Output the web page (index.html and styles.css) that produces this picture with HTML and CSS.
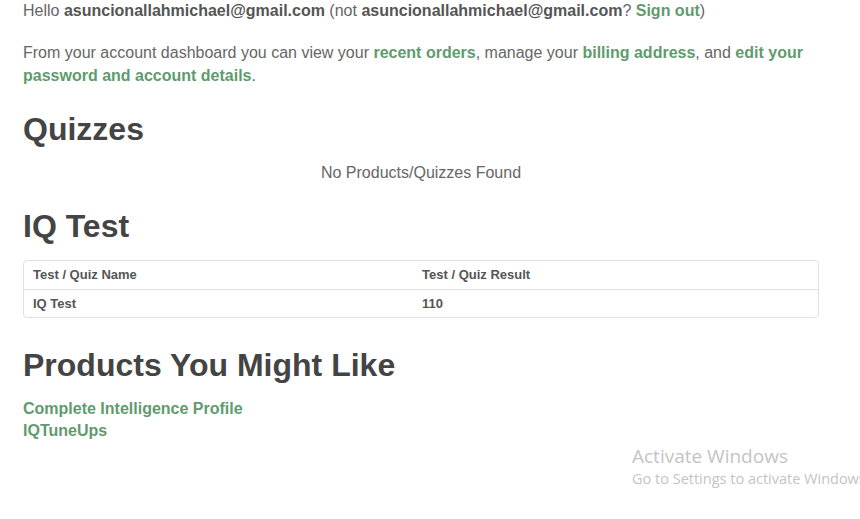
FILE: index.html
```html
<html>
  <head>
    <link rel="stylesheet" href="styles.css">
  </head>
  <body>
    <div class="account">
      <p class="intro">Hello <strong>asuncionallahmichael@gmail.com</strong> (not <strong>asuncionallahmichael@gmail.com</strong>? <a href="#">Sign out</a>)</p>
      <p class="intro">From your account dashboard you can view your <a href="#">recent orders</a>, manage your <a href="#">billing address</a>, and <a href="#">edit your password and account details</a>.</p>

      <h2 class="heading">Quizzes</h2>
      <p class="empty">No Products/Quizzes Found</p>

      <h2 class="heading heading-iq">IQ Test</h2>
      <div class="results">
        <table class="results-table">
          <tr>
            <th class="col-name">Test / Quiz Name</th>
            <th>Test / Quiz Result</th>
          </tr>
          <tr>
            <td class="col-name">IQ Test</td>
            <td>110</td>
          </tr>
        </table>
      </div>

      <h2 class="heading heading-products">Products You Might Like</h2>
      <ul class="products">
        <li><a href="#">Complete Intelligence Profile</a></li>
        <li><a href="#">IQTuneUps</a></li>
      </ul>
    </div>

    <div class="watermark">
      <div class="watermark-title">Activate Windows</div>
      <div class="watermark-sub">Go to Settings to activate Windows.</div>
    </div>
  </body>
</html>
```

FILE: styles.css
```css
body {
  margin: 0;
  background: #fff;
  font-family: "Liberation Sans", Arial, sans-serif;
  color: #666;
  overflow: hidden;
}
.account {
  width: 796px;
  padding: 0 0 0 23px;
  margin-top: -1px;
}
.intro {
  font-size: 16px;
  line-height: 23px;
  margin: 0 0 19px 0;
}
.intro strong {
  color: #555;
}
a {
  color: #5f9b6e;
  font-weight: bold;
  text-decoration: none;
}
.heading {
  font-size: 32px;
  line-height: 38px;
  font-weight: bold;
  color: #444;
  margin: 23px 0 13px 0;
}
.empty {
  font-size: 16px;
  line-height: 23px;
  text-align: center;
  margin: 0;
}
.heading-iq {
  margin-bottom: 15px;
}
.results {
  border: 1px solid #e1e1e1;
  border-radius: 4px;
}
.results-table {
  width: 100%;
  border-collapse: collapse;
  font-size: 13px;
  font-weight: bold;
  color: #555;
}
.results-table th,
.results-table td {
  text-align: left;
  padding: 0 9px;
  height: 28px;
}
.results-table th {
  border-bottom: 1px solid #e1e1e1;
}
.col-name {
  width: 49%;
}
.heading-products {
  margin-top: 28px;
  margin-bottom: 14px;
}
.products {
  list-style: none;
  margin: 0;
  padding: 0;
  font-size: 16px;
  line-height: 22px;
}
.watermark {
  position: absolute;
  left: 632px;
  top: 443px;
  font-family: "Open Sans", "Noto Sans", sans-serif;
  color: #c4c4c4;
  white-space: nowrap;
}
.watermark-title {
  font-size: 19px;
  line-height: 26px;
}
.watermark-sub {
  font-size: 14.5px;
  line-height: 20px;
}
```
